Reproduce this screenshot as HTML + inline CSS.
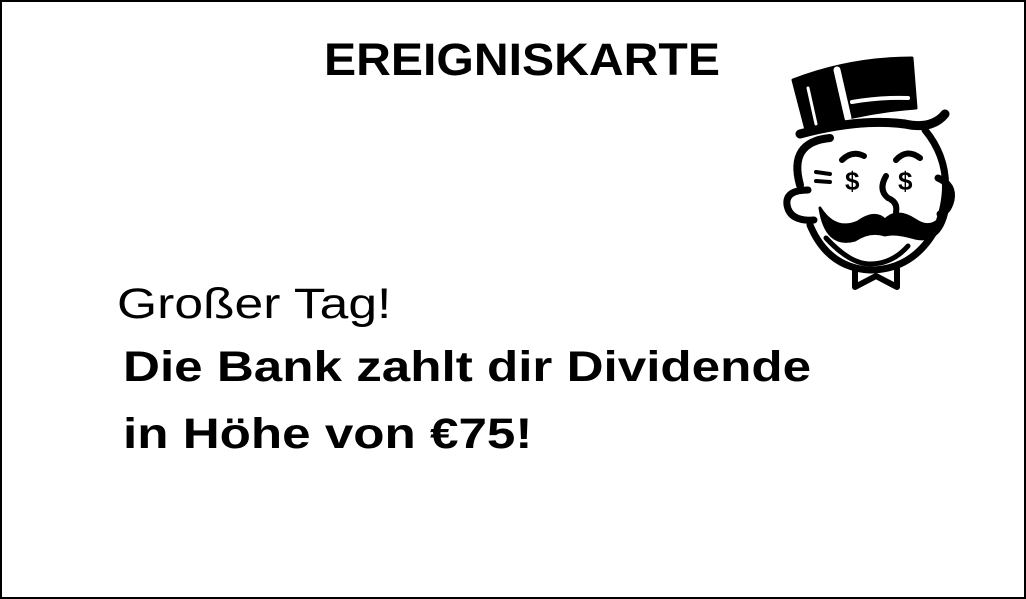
<!DOCTYPE html>
<html><head><meta charset="utf-8"><style>
html,body{margin:0;padding:0}
body{width:1026px;height:599px;background:#fff;position:relative;overflow:hidden;font-family:"Liberation Sans",sans-serif;color:#000}
.frame{position:absolute;left:0;top:0;width:1022px;height:595px;border:2px solid #000}
.t{position:absolute;white-space:nowrap;line-height:1;transform-origin:0 0}
</style></head><body>
<div class="frame"></div>
<div class="t" style="left:324px;top:37px;font-size:45px;font-weight:bold;transform:scaleX(1.07)">EREIGNISKARTE</div>
<div class="t" style="left:117px;top:283px;font-size:43px;transform:scaleX(1.2)">Großer Tag!</div>
<div class="t" style="left:123px;top:346px;font-size:43px;font-weight:bold;transform:scaleX(1.19)">Die Bank zahlt dir Dividende</div>
<div class="t" style="left:123px;top:413px;font-size:43px;font-weight:bold;transform:scaleX(1.19)">in Höhe von €75!</div>
<svg style="position:absolute;left:0;top:0" width="1026" height="599" viewBox="0 0 1026 599">
<g fill="none" stroke="#000" stroke-linecap="round" stroke-linejoin="round">
<path d="M793 80 Q850 58 912 58 L916 108 Q860 112 806 130 Z" fill="#000" stroke-width="3"/>
<path d="M837 70 L848 118" stroke="#fff" stroke-width="7"/>
<path d="M808 88 L816 124" stroke="#fff" stroke-width="3"/>
<path d="M852 102 Q880 97 908 98" stroke="#fff" stroke-width="4"/>
<path d="M800 134 Q860 118 905 124 Q932 130 945 114" stroke-width="9"/>
<path d="M800 185 Q788 142 830 138" stroke-width="8"/>
<path d="M925 130 Q958 170 938 225 Q915 270 870 270 Q828 268 810 225" stroke-width="7"/>
<path d="M808 190 Q785 190 787 205 Q790 222 814 220" stroke-width="7"/>
<path d="M938 178 Q954 185 951 200 Q948 212 940 214" stroke-width="7"/>
<path d="M842 160 Q852 150 864 156" stroke-width="6"/>
<path d="M896 160 Q907 148 920 158" stroke-width="6"/>
<path d="M816 172 L830 174 M816 181 L830 182" stroke-width="4"/>
<path d="M886 176 Q878 190 888 198 Q898 202 896 212" stroke-width="6"/>
<path d="M820 208 Q835 232 858 222 Q875 210 885 220 Q897 208 915 220 Q935 234 948 206 Q942 244 915 238 Q895 232 885 235 Q870 230 855 240 Q826 248 820 208 Z" fill="#000" stroke-width="3"/>
<path d="M826 238 Q850 264 870 264 Q892 264 908 246" stroke-width="5"/>
<path d="M855 268 L855 287 L876 276 L897 287 L897 268" stroke-width="6"/>
</g>
<text x="845" y="190" font-family="Liberation Sans" font-weight="bold" font-size="26">$</text>
<text x="898" y="190" font-family="Liberation Sans" font-weight="bold" font-size="26">$</text>
</svg>
</body></html>
